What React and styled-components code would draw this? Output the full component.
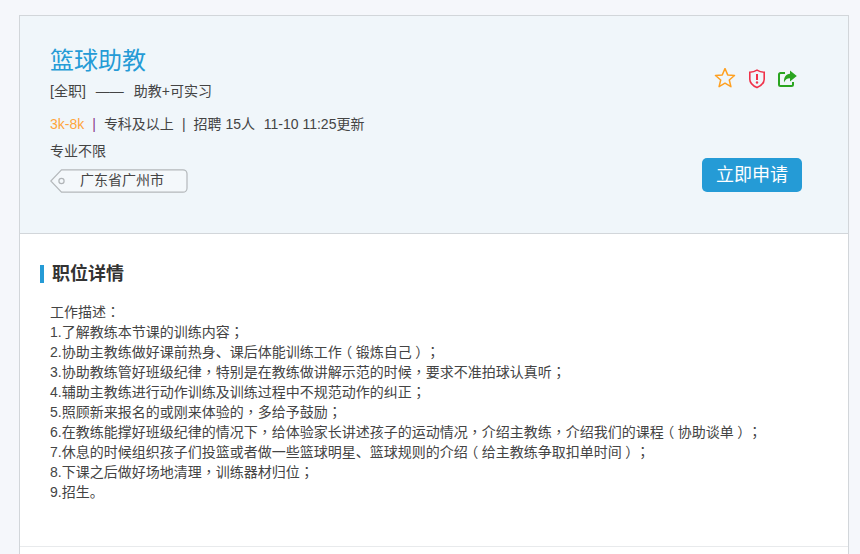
import React from "react";
import styled, { createGlobalStyle } from "styled-components";

const Global = createGlobalStyle`
  html, body { margin: 0; padding: 0; background: #f5f7fb; height: 554px; overflow: hidden; }
  body { font-family: "Liberation Sans", "Noto Sans CJK SC", sans-serif; color: #333; font-size: 14px; text-spacing-trim: space-all; }
`;

const Card = styled.main`
  box-sizing: border-box;
  width: 830px;
  margin: 15px 0 0 19px;
  border: 1px solid #d2d6da;
  border-bottom: none;
  background: #fff;
  height: 539px;
`;
const Header = styled.header`
  box-sizing: border-box;
  height: 218px;
  background: #f0f6fa;
  border-bottom: 1px solid #d2d6da;
  padding: 28px 46px 0 30px;
  display: flex;
  justify-content: space-between;
`;
const Info = styled.div`
  display: flex;
  flex-direction: column;
  align-items: flex-start;
`;
const Title = styled.h1`
  margin: 0;
  font-size: 24px;
  line-height: 34px;
  font-weight: 400;
  color: #259bd6;
`;
const Line = styled.div`
  font-size: 14px;
  line-height: 20px;
  margin-top: ${(p) => p.$top}px;
  white-space: pre;
  color: #444;
`;
const Dash = styled.span`margin: 0 10px;`;
const Salary = styled.span`color: #ffa53d;`;
const Sep = styled.span`
  color: ${(p) => p.$c || "#444"};
  margin: 0 8px;
`;
const Stamp = styled.span`margin-left: 1px;`;
const Tag = styled.div`
  position: relative;
  box-sizing: border-box;
  width: 138px;
  height: 24px;
  margin-top: 8px;
  font-size: 14px;
  line-height: 22px;
  padding-left: 30px;
  color: #444;
`;
const TagShape = styled.svg`
  position: absolute;
  left: 0;
  top: 0;
`;
const TagText = styled.span`position: relative;`;
const Side = styled.div`
  width: 100px;
  display: flex;
  flex-direction: column;
`;
const Icons = styled.div`
  display: flex;
  align-items: center;
  gap: 12px;
  margin: 22px 0 0 12px;
  height: 26px;
`;
const Apply = styled.button`
  width: 100px;
  height: 34px;
  margin-top: 66px;
  border: none;
  border-radius: 5px;
  background: #259bd6;
  color: #fff;
  font-family: inherit;
  font-size: 18px;
  line-height: 34px;
  padding: 0;
`;
const Body = styled.section`
  box-sizing: border-box;
  height: 313px;
  border-bottom: 1px solid #e8eaec;
  padding: 31px 0 0 20px;
`;
const Heading = styled.h2`
  margin: 0;
  height: 18px;
  border-left: 4px solid #259bd6;
  padding-left: 8px;
  font-size: 18px;
  line-height: 18px;
  font-weight: 700;
  color: #333;
`;
const Desc = styled.div`
  margin: 19px 0 0 10px;
  font-size: 14px;
  line-height: 20px;
  color: #444;
  white-space: pre;
`;
const Row = styled.div`
  height: 20px;
`;
const Punct = styled.span`
  font-family: "Noto Sans CJK TC", sans-serif;
  line-height: 0;
`;
const Paren = styled(Punct)`
  font-feature-settings: "halt";
  text-spacing-trim: normal;
  padding: 0 3.5px;
`;

const lines = [
  "工作描述：",
  "1.了解教练本节课的训练内容；",
  "2.协助主教练做好课前热身、课后体能训练工作（锻炼自己）；",
  "3.协助教练管好班级纪律，特别是在教练做讲解示范的时候，要求不准拍球认真听；",
  "4.辅助主教练进行动作训练及训练过程中不规范动作的纠正；",
  "5.照顾新来报名的或刚来体验的，多给予鼓励；",
  "6.在教练能撑好班级纪律的情况下，给体验家长讲述孩子的运动情况，介绍主教练，介绍我们的课程（协助谈单）；",
  "7.休息的时候组织孩子们投篮或者做一些篮球明星、篮球规则的介绍（给主教练争取扣单时间）；",
  "8.下课之后做好场地清理，训练器材归位；",
  "9.招生。",
];

const withPunct = (text) =>
  text.split(/([：；，（）])/).map((part, i) => {
    if (part === "（" || part === "）") return <Paren key={i}>{part}</Paren>;
    if (/^[：；，]$/.test(part)) return <Punct key={i}>{part}</Punct>;
    return part;
  });

export default function App() {
  return (
    <>
      <Global />
      <Card>
        <Header>
          <Info>
            <Title>篮球助教</Title>
            <Line $top={3}>[全职]<Dash>——</Dash>助教+可实习</Line>
            <Line $top={13}>
              <Salary>3k-8k</Salary>
              <Sep $c="#8a3a8a">|</Sep>专科及以上<Sep>|</Sep>招聘 15人{"  "}<Stamp>11-10 11:25更新</Stamp>
            </Line>
            <Line $top={7}>专业不限</Line>
            <Tag>
              <TagShape width="138" height="24" viewBox="0 0 138 24">
                <path d="M11.5 .8H133a4 4 0 0 1 4 4V19.2a4 4 0 0 1-4 4H11.5L.8 12Z" fill="#f4f8fb" stroke="#b4b8bb" strokeWidth="1.2" />
                <circle cx="11.5" cy="12" r="2.6" fill="none" stroke="#b0b4b7" strokeWidth="1.2" />
              </TagShape>
              <TagText>广东省广州市</TagText>
            </Tag>
          </Info>
          <Side>
            <Icons>
              <svg width="22" height="22" viewBox="0 1 22 22">
                <path d="M11 1.500l2.700 6.400 6.800.6-5.200 4.500 1.600 6.700L11 16.200l-5.900 3.500 1.600-6.700L1.500 8.500l6.800-.6Z" fill="none" stroke="#ffa020" strokeWidth="1.5" strokeLinejoin="round" />
              </svg>
              <svg width="18" height="20" viewBox="0 0 18 20">
                <path d="M9 1.200c2.200 1.400 4.600 2 7.200 2v7c0 3.600-3 6.500-7.200 8.400C4.800 16.700 1.800 13.800 1.800 10.200v-7c2.600 0 5-.6 7.200-2Z" fill="none" stroke="#f0324a" strokeWidth="1.600" />
                <path d="M9 5v6" stroke="#f0324a" strokeWidth="2" />
                <circle cx="9" cy="13.500" r="1.200" fill="#f0324a" />
              </svg>
              <svg width="19" height="18" viewBox="0 0 19 18">
                <path d="M7 3H2.500A1.500 1.500 0 0 0 1 4.500v10A1.500 1.500 0 0 0 2.500 16h11a1.500 1.500 0 0 0 1.500-1.500V12" fill="none" stroke="#2aa520" strokeWidth="2" />
                <path d="M12 .5L18.800 6 12 11.500V8.200C9 8.200 7.200 9.600 6 12.500 5.600 7.500 8 4 12 3.800Z" fill="#2aa520" />
              </svg>
            </Icons>
            <Apply>立即申请</Apply>
          </Side>
        </Header>
        <Body>
          <Heading>职位详情</Heading>
          <Desc>{lines.map((l, i) => <Row key={i}>{withPunct(l)}</Row>)}</Desc>
        </Body>
      </Card>
    </>
  );
}
